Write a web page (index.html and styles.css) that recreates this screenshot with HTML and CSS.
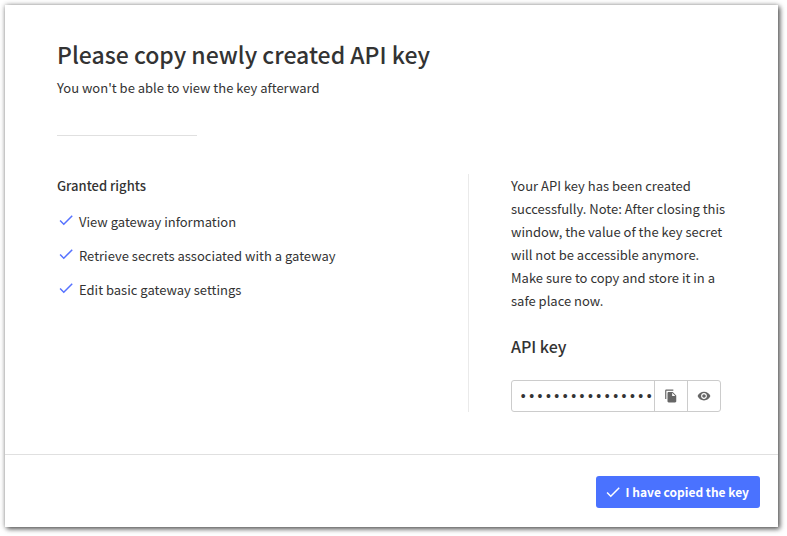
FILE: index.html
```html
<!DOCTYPE html>
<html lang="en">
<head>
<meta charset="utf-8">
<title>API key created</title>
<meta name="viewport" content="width=device-width, initial-scale=1">
<link rel="stylesheet" href="styles.css">
</head>
<body>
<main class="modal" role="dialog" aria-labelledby="modal-title">
  <div class="modal-body">
    <header class="modal-header">
      <h1 id="modal-title" class="title">Please copy newly created API key</h1>
      <p class="subtitle">You won't be able to view the key afterward</p>
    </header>
    <hr class="rule">
    <div class="columns">
      <section class="rights">
        <h2 class="rights-title">Granted rights</h2>
        <ul class="rights-list">
          <li class="right"><svg class="check" viewBox="0 0 24 24" aria-hidden="true"><path d="M9 16.17 4.83 12l-1.42 1.41L9 19 21 7l-1.41-1.41z"/></svg><span>View gateway information</span></li>
          <li class="right"><svg class="check" viewBox="0 0 24 24" aria-hidden="true"><path d="M9 16.17 4.83 12l-1.42 1.41L9 19 21 7l-1.41-1.41z"/></svg><span>Retrieve secrets associated with a gateway</span></li>
          <li class="right"><svg class="check" viewBox="0 0 24 24" aria-hidden="true"><path d="M9 16.17 4.83 12l-1.42 1.41L9 19 21 7l-1.41-1.41z"/></svg><span>Edit basic gateway settings</span></li>
        </ul>
      </section>
      <section class="key">
        <p class="note">Your API key has been created successfully. Note: After closing this window, the value of the key secret will not be accessible anymore. Make sure to copy and store it in a safe place now.</p>
        <h2 class="key-title" id="key-label">API key</h2>
        <div class="key-field">
          <output class="key-value" aria-labelledby="key-label">••••••••••••••••</output>
          <button class="icon-button" type="button" aria-label="Copy to clipboard"><svg class="icon" viewBox="0 0 24 24" aria-hidden="true"><path d="M16 1H4c-1.100 0-2 .9-2 2v14h2V3h12V1zm-1 4 6 6v10c0 1.100-.9 2-2 2H7.990C6.890 23 6 22.100 6 21l.010-14c0-1.100.890-2 1.990-2h7zm-1 7h5.500L14 6.500V12z"/></svg></button>
          <button class="icon-button" type="button" aria-label="Toggle visibility"><svg class="icon" viewBox="0 0 24 24" aria-hidden="true"><path d="M12 4.500C7 4.500 2.730 7.610 1 12c1.730 4.390 6 7.500 11 7.500s9.270-3.110 11-7.500c-1.730-4.390-6-7.500-11-7.500zM12 17c-2.760 0-5-2.240-5-5s2.240-5 5-5 5 2.240 5 5-2.240 5-5 5zm0-8c-1.660 0-3 1.340-3 3s1.340 3 3 3 3-1.340 3-3-1.340-3-3-3z"/></svg></button>
        </div>
      </section>
    </div>
  </div>
  <footer class="modal-footer">
    <button class="primary" type="button"><svg class="check check-light" viewBox="0 0 24 24" aria-hidden="true"><path d="M9 16.17 4.83 12l-1.42 1.41L9 19 21 7l-1.41-1.41z"/></svg>I have copied the key</button>
  </footer>
</main>
</body>
</html>
```
FILE: styles.css
```css
* {
  box-sizing: border-box;
}

body,
h1,
h2,
p,
ul {
  margin: 0;
  padding: 0;
}

body {
  display: flex;
  padding: 5px 9px 9px 5px;
  background: #fff;
  color: #333;
  font: 400 13px/23px "Noto Sans CJK SC", "Noto Sans", sans-serif;
}

.modal {
  flex: 1;
  background: #fff;
  box-shadow: 0 0 5px rgba(0, 0, 0, 0.3), 2px 2px 5px rgba(0, 0, 0, 0.6);
}

.modal-body {
  padding: 31px 57px 42px 52px;
}

.title {
  font-size: 23px;
  font-weight: 500;
  line-height: 36px;
}

.subtitle {
  margin-top: 4px;
}

.rule {
  width: 140px;
  margin: 36px 0 38px;
  border: 0;
  border-top: 1px solid #e0e0e0;
}

.columns {
  display: flex;
}

.rights {
  flex: 1;
}

.rights-title {
  font-size: 13px;
  font-weight: 500;
}

.rights-list {
  display: grid;
  gap: 11px;
  margin-top: 13px;
  list-style: none;
}

.right {
  display: flex;
  gap: 4px;
}

.check {
  width: 18px;
  height: 20px;
  fill: #5672ff;
}

.key {
  width: 253px;
  padding-left: 42px;
  border-left: 1px solid #eaeaea;
}

.note {
  margin-right: -6px;
}

.key-title {
  margin: 23px 0 22px;
  font-size: 16px;
  font-weight: 500;
}

.key-field {
  display: flex;
  height: 32px;
  border: 1px solid #ccc;
  border-radius: 3px;
}

.key-value {
  flex: 1;
  min-width: 0;
  padding-left: 7px;
  font-family: "Liberation Mono", monospace;
  font-size: 14px;
  line-height: 32px;
  white-space: nowrap;
}

.icon-button {
  display: grid;
  place-items: center;
  width: 33px;
  padding: 0;
  border: 0;
  border-left: 1px solid #ccc;
  background: none;
}

.icon {
  width: 14px;
  height: 14px;
  fill: #666;
}

.modal-footer {
  display: flex;
  justify-content: flex-end;
  padding: 21px 18px 19px;
  border-top: 1px solid #e0e0e0;
}

.primary {
  display: flex;
  align-items: center;
  gap: 4px;
  height: 32px;
  padding: 0 11px 1px 8px;
  border: 0;
  border-radius: 3px;
  background: #4a72ff;
  color: #fff;
  font: inherit;
  font-size: 12px;
  font-weight: 700;
}

.check-light {
  fill: #fff;
}
```
